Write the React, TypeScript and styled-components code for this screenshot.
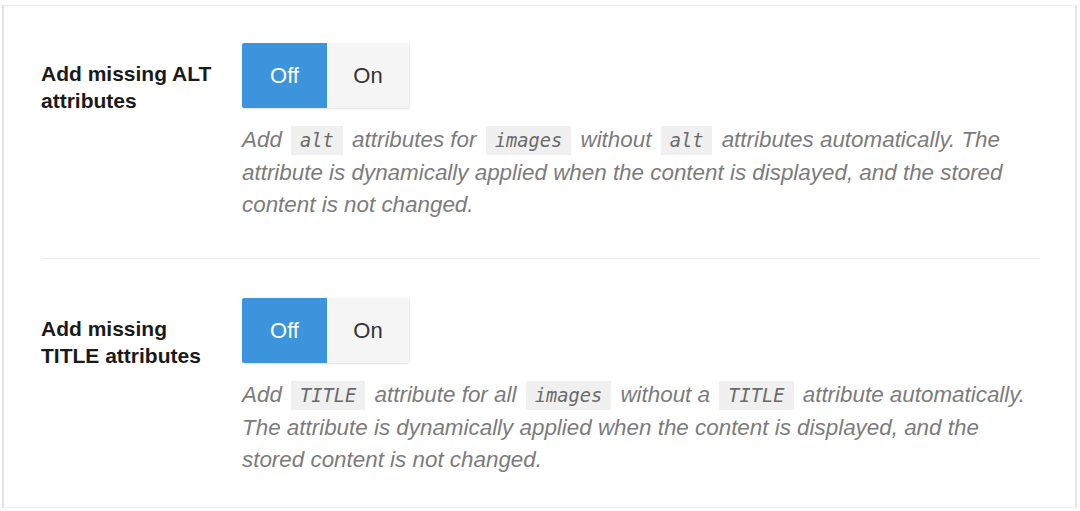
import * as React from 'react'
import styled, { createGlobalStyle } from 'styled-components';

const GlobalStyle = createGlobalStyle`
    html, body{
        margin: 0;
        padding: 0;
        background: #ffffff;
    }
    body{
        font-family: "Liberation Sans", Arial, Helvetica, sans-serif;
    }
`;

interface ISetting{
    label : string[];
    description : React.ReactNode;
}

export default function App() : React.ReactElement{

    /* State */
    const [values, setValues] = React.useState<boolean[]>([false, false]);

    function handleToggle(index : number, value : boolean){
        const newValues = [...values];
        newValues[index] = value;
        setValues(newValues);
    }

    const settings : ISetting[] = [
        {
            label: ['Add missing ALT', 'attributes'],
            description: <>
                Add <Code>alt</Code> attributes for <Code>images</Code> without <Code>alt</Code> attributes automatically. The
                attribute is dynamically applied when the content is displayed, and the stored content is not changed.
            </>
        },
        {
            label: ['Add missing', 'TITLE attributes'],
            description: <>
                Add <Code>TITLE</Code> attribute for all <Code>images</Code> without a <Code>TITLE</Code> attribute automatically.
                The attribute is dynamically applied when the content is displayed, and the stored content is not changed.
            </>
        }
    ];

    return (<>
        <GlobalStyle/>
        <Frame>
            {settings.map((setting, i) => (
                <React.Fragment key={i}>
                    {i > 0 && <Divider/>}
                    <SettingRow>
                        <Label>
                            {setting.label[0]}<br/>{setting.label[1]}
                        </Label>
                        <Control>
                            <Toggle>
                                <ToggleButton $active={!values[i]} $wide onClick={() => handleToggle(i, false)}>Off</ToggleButton>
                                <ToggleButton $active={values[i]} onClick={() => handleToggle(i, true)}>On</ToggleButton>
                            </Toggle>
                            <Description>{setting.description}</Description>
                        </Control>
                    </SettingRow>
                </React.Fragment>
            ))}
        </Frame>
    </>);
}

const Frame = styled.div`
    margin: 5px 3px 2px 2px;
    height: 503px;
    box-sizing: border-box;
    border-top: 1px solid #ececec;
    border-left: 2px solid #e0e0e0;
    border-right: 2px solid #e6e6e6;
    border-bottom: 1px solid #efefef;
    background: #ffffff;
    overflow: hidden;
`;

const SettingRow = styled.div`
    display: grid;
    grid-template-columns: 201px 800px;
    padding: 37px 0 37px 37px;
`;

const Label = styled.div`
    font-size: 21px;
    font-weight: bold;
    line-height: 27px;
    color: #1a1a1a;
    margin-top: 17px;
`;

const Control = styled.div`
    display: flex;
    flex-direction: column;
    align-items: flex-start;
`;

const Toggle = styled.div`
    display: flex;
    height: 65px;
    box-shadow: 0 1px 2px rgba(0, 0, 0, 0.12), 1px 0 1px rgba(0, 0, 0, 0.06);
    border-radius: 2px;
`;

const ToggleButton = styled.button<{ $active?: boolean; $wide?: boolean }>`
    width: ${p => p.$wide ? 85 : 82}px;
    height: 100%;
    border: none;
    margin: 0;
    padding: 0;
    font-family: "Liberation Sans", Arial, sans-serif;
    font-size: 22px;
    background: ${p => p.$active ? '#3c94dd' : '#f5f5f5'};
    color: ${p => p.$active ? '#ffffff' : '#333333'};
    border-radius: ${p => p.$wide ? '2px 0 0 2px' : '0 2px 2px 0'};
    cursor: pointer;
`;

const Description = styled.p`
    margin: 16px 0 0;
    width: 797px;
    font-size: 22.4px;
    line-height: 32px;
    font-style: italic;
    color: #7c7c7c;
`;

const Code = styled.code`
    font-family: "DejaVu Sans Mono", "Liberation Mono", monospace;
    font-style: italic;
    font-size: 18.7px;
    color: #6a6a6a;
    background: #f0f0f0;
    padding: 4px 9px;
    margin: 0 3px;
`;

const Divider = styled.div`
    height: 1px;
    margin: 0 35px 2px 38px;
    background: #ececec;
`;
